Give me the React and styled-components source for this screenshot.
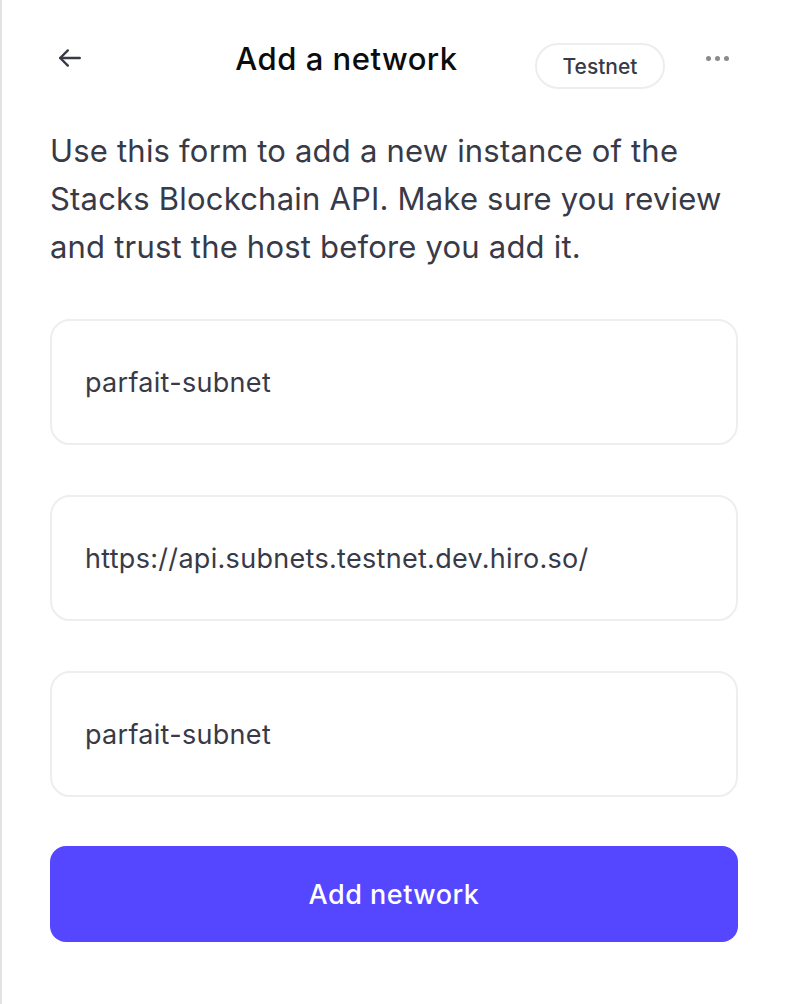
import React from "react";
import styled, { createGlobalStyle } from "styled-components";

const GlobalStyle = createGlobalStyle`
  html, body {
    margin: 0;
    padding: 0;
    background: #ffffff;
  }
  body {
    font-family: Inter, "Noto Sans", sans-serif;
    -webkit-font-smoothing: antialiased;
  }
`;

const Page = styled.div`
  min-height: 1004px;
  box-sizing: border-box;
  border-left: 2px solid #e2e2e2;
  padding: 32px 48px 0 48px;
`;

const Header = styled.header`
  display: flex;
  align-items: center;
  height: 52px;
`;

const Left = styled.div`
  width: 108px;
  display: flex;
  align-items: center;
  padding-left: 7px;
  box-sizing: border-box;
`;

const Right = styled.div`
  width: 203px;
  display: flex;
  align-items: center;
  justify-content: space-between;
  padding-right: 9px;
  box-sizing: border-box;
`;

const Title = styled.h1`
  flex: 1;
  margin: 0;
  text-align: center;
  font-size: 31px;
  font-weight: 500;
  color: #0c0c0d;
  letter-spacing: 0.5px;
`;

const IconButton = styled.button`
  border: none;
  background: none;
  padding: 0;
  display: flex;
  align-items: center;
  color: #383a47;
  cursor: pointer;
`;

const Pill = styled.span`
  margin-top: 16px;
  width: 130px;
  height: 46px;
  box-sizing: border-box;
  border: 2px solid #ededed;
  border-radius: 23px;
  display: flex;
  align-items: center;
  justify-content: center;
  font-size: 21px;
  font-weight: 500;
  color: #383a47;
`;

const Dots = styled.span`
  display: flex;
  gap: 4px;
  span {
    width: 5px;
    height: 5px;
    border-radius: 50%;
    background: #8a8a8f;
  }
`;

const Description = styled.p`
  margin: 43px 0 48px;
  font-size: 31px;
  line-height: 48px;
  letter-spacing: 0.2px;
  color: #383a47;
`;

const Form = styled.form`
  display: flex;
  flex-direction: column;
  gap: 50px;
`;

const Field = styled.input`
  height: 126px;
  box-sizing: border-box;
  border: 2px solid #eeeeee;
  border-radius: 20px;
  padding: 0 33px;
  font-family: Inter, "Noto Sans", sans-serif;
  font-size: 27px;
  letter-spacing: 0.3px;
  color: #383a47;
  background: #fff;
  outline: none;
`;

const SubmitButton = styled.button`
  margin-top: -1px;
  height: 96px;
  border: none;
  border-radius: 16px;
  background: #5546ff;
  color: #ffffff;
  font-family: Inter, "Noto Sans", sans-serif;
  font-size: 27px;
  font-weight: 500;
  letter-spacing: 0.5px;
  cursor: pointer;
`;

function ArrowLeft() {
  return (
    <svg width="26" height="26" viewBox="0 0 24 24" fill="none" stroke="currentColor" strokeWidth="2.2" strokeLinecap="round" strokeLinejoin="round">
      <path d="M21 12H3" />
      <path d="M10 5l-7 7 7 7" />
    </svg>
  );
}

export default function App() {
  return (
    <>
      <GlobalStyle />
      <Page>
        <Header>
          <Left>
            <IconButton aria-label="Back">
              <ArrowLeft />
            </IconButton>
          </Left>
          <Title>Add a network</Title>
          <Right>
            <Pill>Testnet</Pill>
            <Dots>
              <span />
              <span />
              <span />
            </Dots>
          </Right>
        </Header>
        <Description>
          Use this form to add a new instance of the Stacks Blockchain API. Make
          sure you review and trust the host before you add it.
        </Description>
        <Form onSubmit={(e) => e.preventDefault()}>
          <Field defaultValue="parfait-subnet" />
          <Field defaultValue="https://api.subnets.testnet.dev.hiro.so/" />
          <Field defaultValue="parfait-subnet" />
          <SubmitButton type="submit">Add network</SubmitButton>
        </Form>
      </Page>
    </>
  );
}
